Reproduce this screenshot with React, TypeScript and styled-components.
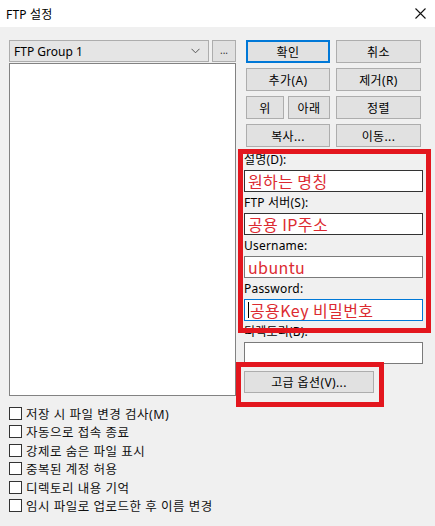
import React from 'react';
import styled, { createGlobalStyle } from 'styled-components';

const GlobalStyle = createGlobalStyle`
  body {
    margin: 0;
    background: #ffffff;
    font-family: 'Noto Sans', 'Noto Sans CJK KR', sans-serif;
  }
`;

const UI_FONT = `'Noto Sans', 'Noto Sans CJK KR', sans-serif`;
const RED = '#e3161e';

const Window = styled.div`
  position: relative;
  width: 435px;
  height: 526px;
  background: #f0f0f0;
  font-family: ${UI_FONT};
  font-size: 12px;
  color: #000;
  overflow: hidden;
`;

const TitleBar = styled.div`
  height: 27px;
  background: #ffffff;
  display: flex;
  align-items: center;
  justify-content: space-between;
  padding: 0 9px 0 6px;
  font-size: 12px;
  letter-spacing: 0.2px;
`;

const Body = styled.div`
  display: grid;
  grid-template-columns: 227px 180px;
  column-gap: 8px;
  padding: 13px 0 0 9px;
`;

const LeftCol = styled.div`
  display: flex;
  flex-direction: column;
`;

const ComboRow = styled.div`
  display: flex;
  gap: 3px;
  height: 22px;
`;

const Combo = styled.div`
  flex: 1;
  box-sizing: border-box;
  display: flex;
  align-items: center;
  justify-content: space-between;
  padding: 0 8px 0 4px;
  background: #e5e5e5;
  border: 1px solid #adadad;
`;

const SmallButton = styled.div`
  width: 24px;
  box-sizing: border-box;
  background: #e1e1e1;
  border: 1px solid #adadad;
  display: flex;
  align-items: center;
  justify-content: center;
  font-size: 10px;
  color: #333;
  padding-bottom: 2px;
`;

const ListBox = styled.div`
  margin-top: 1px;
  height: 333px;
  box-sizing: border-box;
  background: #ffffff;
  border: 1px solid #828282;
`;

const CheckList = styled.div`
  grid-column: 1 / span 2;
  margin-top: 8px;
  display: flex;
  flex-direction: column;
`;

const CheckRow = styled.label`
  display: flex;
  align-items: center;
  height: 18.5px;
  gap: 4px;
  font-size: 12.5px;
  letter-spacing: 0.5px;
  color: #111;
`;

const Box = styled.span`
  width: 13px;
  height: 13px;
  box-sizing: border-box;
  background: #fff;
  border: 1px solid #333;
`;

const RightCol = styled.div`
  display: flex;
  flex-direction: column;
`;

const ButtonGrid = styled.div`
  display: grid;
  grid-template-columns: 84px 85px;
  grid-auto-rows: 23px;
  column-gap: 6px;
  row-gap: 5px;
  margin-left: 2px;
`;

const SplitCell = styled.div`
  display: grid;
  grid-template-columns: 38px 42px;
  column-gap: 4px;
`;

const Button = styled.div<{ $primary?: boolean; $width?: number }>`
  box-sizing: border-box;
  width: ${(p) => (p.$width ? `${p.$width}px` : 'auto')};
  height: ${(p) => (p.$width ? '22px' : 'auto')};
  background: #e1e1e1;
  border: ${(p) => (p.$primary ? '2px solid #0078d7' : '1px solid #adadad')};
  display: flex;
  align-items: center;
  justify-content: center;
  font-size: 12px;
  letter-spacing: 0.4px;
`;

const Form = styled.div`
  margin-top: 2px;
  display: flex;
  flex-direction: column;
`;

const Label = styled.div`
  height: 21px;
  line-height: 21px;
  font-size: 12px;
  letter-spacing: 0.2px;
`;

const Input = styled.div<{ $focus?: boolean; $dark?: boolean }>`
  width: 179px;
  height: 22px;
  box-sizing: border-box;
  background: #fff;
  border: 1px solid ${(p) => (p.$focus ? '#0078d7' : p.$dark ? '#333' : '#7a7a7a')};
  display: flex;
  align-items: center;
  padding-left: 3px;
  font-family: 'Noto Sans CJK KR', sans-serif;
  font-size: 16px;
  letter-spacing: 0.4px;
  color: #dc2a31;
  white-space: nowrap;
  overflow: hidden;
`;

const Caret = styled.span`
  display: inline-block;
  width: 1px;
  height: 16px;
  background: #000;
  margin-right: 1px;
`;

const OptionButton = styled(Button)`
  margin-top: 7px;
`;

const Mark = styled.div<{ $x: number; $y: number; $w: number; $h: number }>`
  position: absolute;
  left: ${(p) => p.$x}px;
  top: ${(p) => p.$y}px;
  width: ${(p) => p.$w}px;
  height: ${(p) => p.$h}px;
  box-sizing: border-box;
  border: 5px solid ${RED};
  pointer-events: none;
`;

const checks = [
  '저장 시 파일 변경 검사(M)',
  '자동으로 접속 종료',
  '강제로 숨은 파일 표시',
  '중복된 계정 허용',
  '디렉토리 내용 기억',
  '임시 파일로 업로드한 후 이름 변경',
];

const Chevron = () => (
  <svg width="9" height="6" viewBox="0 0 9 6">
    <path d="M0.5 0.8 L4.5 4.8 L8.5 0.8" fill="none" stroke="#555" strokeWidth="1" />
  </svg>
);

const CloseIcon = () => (
  <svg width="11" height="11" viewBox="0 0 11 11">
    <path d="M0.5 0.5 L10.5 10.5 M10.5 0.5 L0.5 10.5" stroke="#111" strokeWidth="1.1" />
  </svg>
);

export default function App() {
  return (
    <>
      <GlobalStyle />
      <Window>
        <TitleBar>
          <span>FTP 설정</span>
          <CloseIcon />
        </TitleBar>
        <Body>
          <LeftCol>
            <ComboRow>
              <Combo>
                <span>FTP Group 1</span>
                <Chevron />
              </Combo>
              <SmallButton>...</SmallButton>
            </ComboRow>
            <ListBox />
          </LeftCol>
          <RightCol>
            <ButtonGrid>
              <Button $primary>확인</Button>
              <Button>취소</Button>
              <Button>추가(A)</Button>
              <Button>제거(R)</Button>
              <SplitCell>
                <Button>위</Button>
                <Button>아래</Button>
              </SplitCell>
              <Button>정렬</Button>
              <Button>복사...</Button>
              <Button>이동...</Button>
            </ButtonGrid>
            <Form>
              <Label>설명(D):</Label>
              <Input $dark>원하는 명칭</Input>
              <Label>FTP 서버(S):</Label>
              <Input $dark>공용 IP주소</Input>
              <Label>Username:</Label>
              <Input>ubuntu</Input>
              <Label>Password:</Label>
              <Input $focus>
                <Caret />
                공용Key 비밀번호
              </Input>
              <Label>디렉토리(B):</Label>
              <Input />
              <OptionButton $width={130}>고급 옵션(V)...</OptionButton>
            </Form>
          </RightCol>
          <CheckList>
            {checks.map((c) => (
              <CheckRow key={c}>
                <Box />
                {c}
              </CheckRow>
            ))}
          </CheckList>
        </Body>
        <Mark $x={238} $y={149} $w={193} $h={184} />
        <Mark $x={236} $y={362} $w={148} $h={45} />
      </Window>
    </>
  );
}
